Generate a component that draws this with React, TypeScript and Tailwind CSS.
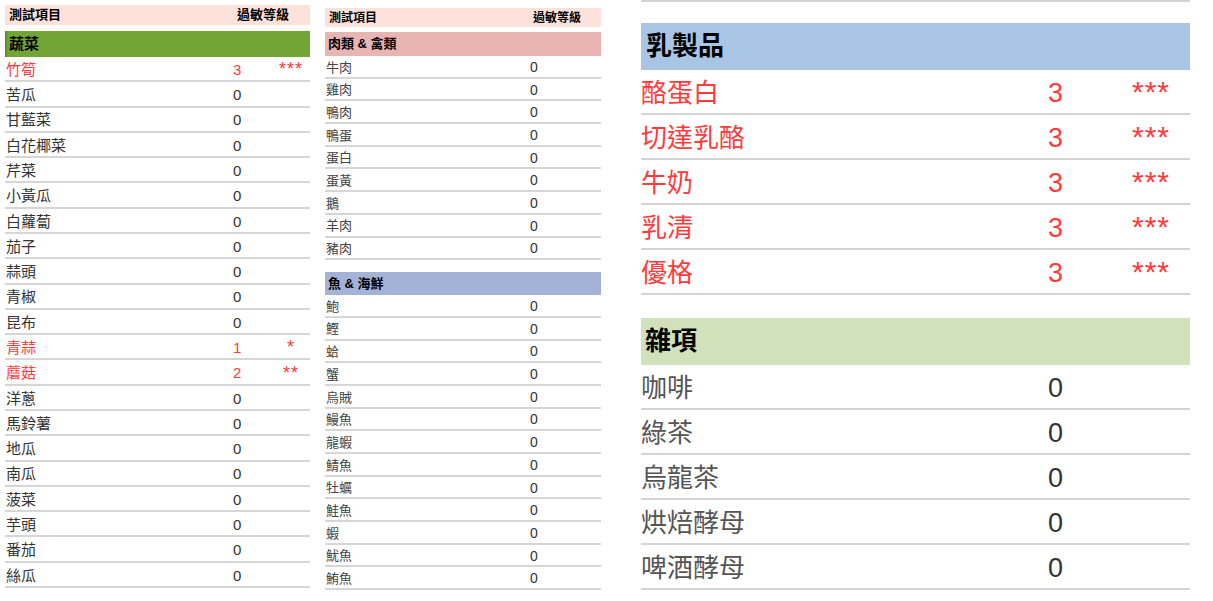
const FONT = { fontFamily: '"Liberation Sans", Arial, "Noto Sans CJK TC", sans-serif' };

type Item = { name: string; level: number };

const vegetables: Item[] = [
  { name: '竹筍', level: 3 },
  { name: '苦瓜', level: 0 },
  { name: '甘藍菜', level: 0 },
  { name: '白花椰菜', level: 0 },
  { name: '芹菜', level: 0 },
  { name: '小黃瓜', level: 0 },
  { name: '白蘿蔔', level: 0 },
  { name: '茄子', level: 0 },
  { name: '蒜頭', level: 0 },
  { name: '青椒', level: 0 },
  { name: '昆布', level: 0 },
  { name: '青蒜', level: 1 },
  { name: '蘑菇', level: 2 },
  { name: '洋蔥', level: 0 },
  { name: '馬鈴薯', level: 0 },
  { name: '地瓜', level: 0 },
  { name: '南瓜', level: 0 },
  { name: '菠菜', level: 0 },
  { name: '芋頭', level: 0 },
  { name: '番茄', level: 0 },
  { name: '絲瓜', level: 0 },
];

const meats = ['牛肉', '雞肉', '鴨肉', '鴨蛋', '蛋白', '蛋黃', '鵝', '羊肉', '豬肉'];
const seafood = ['鮑', '鰹', '蛤', '蟹', '烏賊', '鰻魚', '龍蝦', '鯖魚', '牡蠣', '鮭魚', '蝦', '魷魚', '鮪魚'];
const dairy = ['酪蛋白', '切達乳酪', '牛奶', '乳清', '優格'];
const misc = ['咖啡', '綠茶', '烏龍茶', '烘焙酵母', '啤酒酵母'];

const stars = (n: number) => '*'.repeat(n);

function VegRow({ item }: { item: Item }) {
  const hit = item.level > 0;
  return (
    <div className={`flex h-[25.29px] items-center border-b-2 border-[#d6d6d6] pt-[3px] text-[15px] ${hit ? 'text-[#ff3b3b]' : 'text-[#333]'}`}>
      <span className="w-[228px] pl-[1px]">{item.name}</span>
      <span className="w-[40px]">{item.level}</span>
      <span className="w-[36px] text-center text-[18px] leading-none -translate-y-[1px] tracking-[1px]">{hit ? stars(item.level) : ''}</span>
    </div>
  );
}

function MidRow({ name }: { name: string }) {
  return (
    <div className="flex h-[22.69px] items-center border-b-2 border-[#d6d6d6] pt-[2px] text-[13px] text-[#444]">
      <span className="w-[205px] pl-[1px]">{name}</span>
      <span className="text-[14px] text-[#333]">0</span>
    </div>
  );
}

function BigRow({ name, level }: { name: string; level: number }) {
  const hit = level > 0;
  return (
    <div className={`flex h-[45px] items-center border-b-2 border-[#d4d4d4] pt-[4px] text-[26px] ${hit ? 'text-[#ff3b3b]' : 'text-[#555]'}`}>
      <span className="w-[407px]">{name}</span>
      <span className={`w-[80px] text-[27px] ${hit ? '' : 'text-[#333]'}`}>{level}</span>
      <span className="w-[46px] text-center text-[30px] leading-none -translate-y-[2px] tracking-[1px]">{hit ? stars(level) : ''}</span>
    </div>
  );
}

export default function App() {
  return (
    <div className="flex h-[601px] w-[1213px] overflow-hidden bg-white pl-[5px]" style={FONT}>
      {/* vegetables */}
      <div className="w-[305px] pt-[5px]">
        <div className="flex h-[20px] items-center bg-[#fde2dc] text-[13px] font-bold text-black">
          <span className="w-[232px] pl-[4px]">測試項目</span>
          <span>過敏等級</span>
        </div>
        <div className="mt-[6px] flex h-[26px] items-center border-l-2 border-[#5f8f2a] bg-[#72a536] pl-[2px] text-[15px] font-bold text-black">
          蔬菜
        </div>
        {vegetables.map((v) => (
          <VegRow key={v.name} item={v} />
        ))}
      </div>

      {/* meats & seafood */}
      <div className="ml-[15px] w-[276px] pt-[8px]">
        <div className="flex h-[19px] items-center bg-[#fde2dc] text-[12px] font-bold text-black">
          <span className="w-[208px] pl-[4px]">測試項目</span>
          <span>過敏等級</span>
        </div>
        <div className="mt-[5px] flex h-[24px] items-center bg-[#e9b5b3] pl-[3px] text-[13px] font-bold text-black">
          肉類 &amp; 禽類
        </div>
        {meats.map((m) => (
          <MidRow key={m} name={m} />
        ))}
        <div className="mt-[12px] flex h-[23px] items-center bg-[#a4b2d7] pl-[3px] text-[13px] font-bold text-black">
          魚 &amp; 海鮮
        </div>
        {seafood.map((s) => (
          <MidRow key={s} name={s} />
        ))}
      </div>

      {/* dairy & misc */}
      <div className="ml-[40px] w-[549px]">
        <div className="h-[2px] bg-[#d4d4d4]" />
        <div className="mt-[21px] flex h-[47px] items-center bg-[#a9c5e5] pl-[5px] text-[26px] font-bold text-black">
          乳製品
        </div>
        {dairy.map((d) => (
          <BigRow key={d} name={d} level={3} />
        ))}
        <div className="mt-[23px] flex h-[47px] items-center bg-[#d1e1ba] pl-[4px] text-[26px] font-bold text-black">
          雜項
        </div>
        {misc.map((m) => (
          <BigRow key={m} name={m} level={0} />
        ))}
      </div>
    </div>
  );
}
